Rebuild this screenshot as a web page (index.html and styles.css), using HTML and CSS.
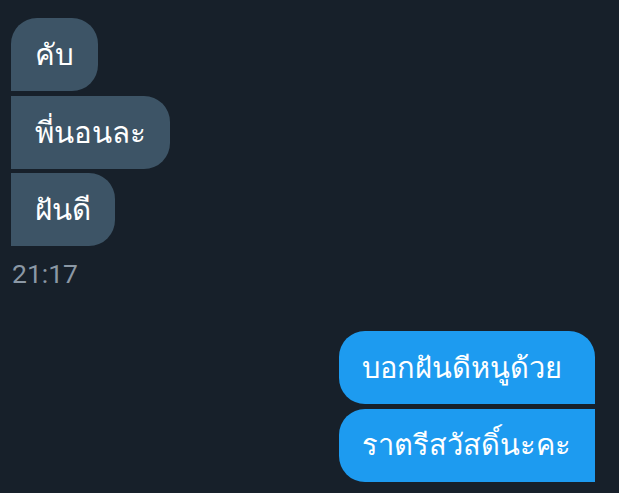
FILE: index.html
```html
<!DOCTYPE html>
<html lang="th">
<head>
<meta charset="utf-8">
<link rel="stylesheet" href="styles.css">
</head>
<body>
<div class="chat">
  <div class="group received">
    <div class="bubble first">คับ</div>
    <div class="bubble">พี่นอนละ</div>
    <div class="bubble last">ฝันดี</div>
  </div>
  <div class="time">21:17</div>
  <div class="sent-wrap">
    <div class="group sent">
      <div class="bubble first">บอกฝันดีหนูด้วย</div>
      <div class="bubble last">ราตรีสวัสดิ์นะคะ</div>
    </div>
  </div>
</div>
</body>
</html>
```
FILE: styles.css
```css
html, body {
  margin: 0;
  padding: 0;
  background: #17202a;
  width: 619px;
  height: 493px;
  overflow: hidden;
}
.chat {
  padding: 18px 24px 0 11px;
  font-family: "Noto Sans", "DejaVu Sans", sans-serif;
}
.group {
  display: flex;
  flex-direction: column;
  gap: 4.5px;
}
.received {
  align-items: flex-start;
}
.bubble {
  height: 73px;
  box-sizing: border-box;
  display: flex;
  align-items: center;
  padding: 0 24px;
  font-size: 29.5px;
  color: #ffffff;
  white-space: nowrap;
}
.received .bubble {
  background: #3d5466;
  border-radius: 0 26px 26px 0;
}
.received .bubble.first {
  border-top-left-radius: 26px;
}
.time {
  margin-top: 13px;
  padding-left: 1px;
  font-family: Roboto, "Liberation Sans", sans-serif;
  font-size: 26.5px;
  color: #8b98a5;
  line-height: 30px;
}
.sent-wrap {
  display: flex;
  justify-content: flex-end;
  margin-top: 42px;
}
.sent {
  align-items: stretch;
}
.sent .bubble {
  background: #1d9bf0;
  border-radius: 26px 0 0 26px;
  font-size: 29px;
  padding: 0 24px 0 23px;
}
.sent .bubble.first {
  border-top-right-radius: 26px;
}
```
